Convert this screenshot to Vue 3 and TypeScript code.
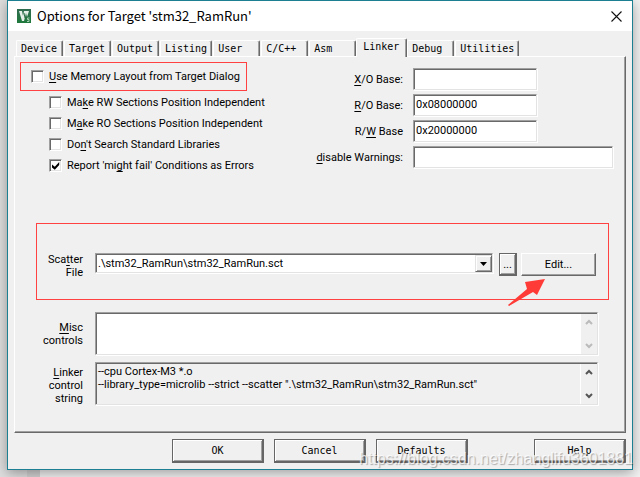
<script setup lang="ts">
import { ref } from 'vue'

interface Tab { name: string }
interface Option { id: string; pre: string; key: string; post: string; on: boolean }
interface Field { id: string; pre: string; key: string; post: string; value: string; wide?: boolean }

const tabs: Tab[] = ['Device', 'Target', 'Output', 'Listing', 'User', 'C/C++', 'Asm', 'Linker', 'Debug', 'Utilities'].map(name => ({ name }))
const active = ref('Linker')
const useLayout = ref(false)

const options = ref<Option[]>([
  { id: 'rw', pre: 'Ma', key: 'k', post: 'e RW Sections Position Independent', on: false },
  { id: 'ro', pre: 'M', key: 'a', post: 'ke RO Sections Position Independent', on: false },
  { id: 'lib', pre: 'Do', key: 'n', post: "'t Search Standard Libraries", on: false },
  { id: 'err', pre: "Report 'mi", key: 'g', post: "ht fail' Conditions as Errors", on: true },
])

const fields = ref<Field[]>([
  { id: 'xo', pre: '', key: 'X', post: '/O Base:', value: '' },
  { id: 'robase', pre: '', key: 'R', post: '/O Base:', value: '0x08000000' },
  { id: 'rwbase', pre: 'R/', key: 'W', post: ' Base', value: '0x20000000' },
  { id: 'warn', pre: '', key: 'd', post: 'isable Warnings:', value: '', wide: true },
])

const scatter = ref('.\\stm32_RamRun\\stm32_RamRun.sct')
const misc = ref('')
const control = '--cpu Cortex-M3 *.o\n--library_type=microlib --strict --scatter ".\\stm32_RamRun\\stm32_RamRun.sct"'
</script>

<template>
  <div class="desktop">
    <main class="dialog">
      <header class="titlebar">
        <svg class="logo" viewBox="0 0 14 14" aria-hidden="true">
          <defs>
            <linearGradient id="green" x1="0" y1="0" x2="0" y2="1">
              <stop offset="0" stop-color="#2f6b50" />
              <stop offset="1" stop-color="#1f7a3c" />
            </linearGradient>
          </defs>
          <rect width="14" height="14" fill="url(#green)" />
          <path d="M2 2h3l1 5 1-5h5l-2 6-1-4-2 8H5z" fill="#e4efe7" />
          <path d="M7 4l1 5" stroke="#2b7048" stroke-width="1" />
          <path d="M12.500 9h-2v1.500h1.500v2h-2" fill="none" stroke="#a8d0b4" stroke-width="1" />
        </svg>
        <h1>Options for Target 'stm32_RamRun'</h1>
        <button class="close" aria-label="Close">
          <svg viewBox="0 0 11 11"><path d="M.5.5l10 10M10.500.5l-10 10" stroke="#111" stroke-width="1.100" /></svg>
        </button>
      </header>

      <nav class="tabs" role="tablist">
        <button v-for="t in tabs" :key="t.name" role="tab" class="tab" :class="{ active: t.name === active }"
          :aria-selected="t.name === active" @click="active = t.name">{{ t.name }}</button>
      </nav>

      <section class="panel">
        <div class="upper">
          <div class="checks">
            <label class="check marked"><input v-model="useLayout" type="checkbox"><span><u>U</u>se Memory Layout from Target Dialog</span></label>
            <div class="sublist">
              <label v-for="o in options" :key="o.id" class="check">
                <input v-model="o.on" type="checkbox"><span>{{ o.pre }}<u>{{ o.key }}</u>{{ o.post }}</span>
              </label>
            </div>
          </div>
          <div class="fields">
            <template v-for="f in fields" :key="f.id">
              <label :for="f.id">{{ f.pre }}<u>{{ f.key }}</u>{{ f.post }}</label>
              <input :id="f.id" v-model="f.value" type="text" class="sunken" :class="{ wide: f.wide }">
            </template>
          </div>
        </div>

        <div class="scatter">
          <label for="scatter">Sca<u>t</u>ter<br>File</label>
          <div class="combo sunken">
            <select id="scatter" v-model="scatter"><option>{{ scatter }}</option></select>
            <span class="drop"><svg viewBox="0 0 7 4"><path d="M0 0h7L3.500 4z" /></svg></span>
          </div>
          <button class="push framed browse">...</button>
          <button class="push edit">Edit...</button>
          <svg class="arrow" viewBox="0 0 38 28" aria-hidden="true">
            <path d="M0 26L19 10 17 3 37 0 29 16 25 13 1 27z" fill="#ff3b38" />
          </svg>
        </div>

        <div class="memo">
          <label for="misc"><u>M</u>isc<br>controls</label>
          <div class="area sunken">
            <textarea id="misc" v-model="misc"></textarea>
            <div class="scroll off">
              <svg viewBox="0 0 8 6"><path d="M1 5l3-3 3 3" /></svg>
              <svg viewBox="0 0 8 6"><path d="M1 1l3 3 3-3" /></svg>
            </div>
          </div>
        </div>
        <div class="memo">
          <label for="control"><u>L</u>inker<br>control<br>string</label>
          <div class="area sunken gray">
            <textarea id="control" readonly :value="control"></textarea>
            <div class="scroll">
              <svg viewBox="0 0 8 6"><path d="M1 5l3-3 3 3" /></svg>
              <svg viewBox="0 0 8 6"><path d="M1 1l3 3 3-3" /></svg>
            </div>
          </div>
        </div>
      </section>

      <footer class="actions">
        <button class="push framed">OK</button>
        <button class="push framed">Cancel</button>
        <button class="push framed">Defaults</button>
        <button class="push framed help">Help</button>
      </footer>
    </main>
    <div class="watermark">https://blog.csdn.net/zhanglifu3601881</div>
  </div>
</template>

<style>
body { background: #ececec; }
</style>

<style scoped>
* { box-sizing: border-box; }
.desktop {
  position: relative;
  min-height: 100vh;
  padding: 0 7px;
  overflow: hidden;
  font: 11px/13px Roboto, "Liberation Sans", sans-serif;
  color: #000;
  background: linear-gradient(90deg, #dedede 27px, #d2d2d2 27px, #d2d2d2 40px, #f2f2f2 40px);
}
.dialog {
  display: flow-root;
  background: #f0f0f0;
  border: 1px solid #1d7f92;
  box-shadow: 0 3px 12px rgba(0, 0, 0, .35);
}
button, input, textarea, select { font: inherit; color: inherit; margin: 0; }
u { text-decoration: underline; text-underline-offset: 2px; text-decoration-thickness: 1px; }
.titlebar {
  display: flex;
  align-items: center;
  gap: 6px;
  height: 30px;
  padding: 0 10px 0 9px;
  background: #fff;
}
.logo { width: 14px; height: 14px; }
h1 { flex: 1; margin: 0; font: 400 13px/20px "Noto Sans CJK SC", "Noto Sans", sans-serif; }
.close { width: 11px; height: 11px; padding: 0; border: 0; background: none; }
.close svg { display: block; }

.tabs {
  display: flex;
  align-items: flex-end;
  gap: 1px;
  height: 25px;
  padding: 0 8px;
}
.tab {
  min-width: 47px;
  height: 16px;
  padding: 0 4px;
  text-align: left;
  font: 10px/14px "DejaVu Sans Mono", monospace;
  background: #f0f0f0;
  border: 1px solid #fff;
  border-right-color: #696969;
  border-bottom: 0;
  border-radius: 2px 2px 0 0;
  box-shadow: inset -1px 0 #a0a0a0;
}
.tab.active {
  position: relative;
  height: 19px;
  min-width: 51px;
  margin: 0 -1px -1px;
  padding: 0 6px 3px;
}

.panel {
  margin: 0 6px;
  padding: 5px 12px 27px 5px;
  border: 1px solid #fff;
  border-right-color: #696969;
  border-bottom-color: #696969;
  box-shadow: inset -1px -1px #a0a0a0;
}
.upper { display: flex; justify-content: space-between; align-items: flex-start; }
.check { display: flex; align-items: center; gap: 5px; height: 21px; white-space: nowrap; }
.check input {
  appearance: none;
  width: 13px;
  height: 13px;
  background: #fff;
  border: 1px solid #a0a0a0;
  border-right-color: #fff;
  border-bottom-color: #fff;
  box-shadow: inset 1px 1px #696969, inset -1px -1px #e3e3e3;
}
.check input:checked::after {
  content: "";
  display: block;
  width: 8px;
  height: 8px;
  margin: 2px;
  background: #000;
  clip-path: polygon(0 30%, 35% 58%, 90% 0, 90% 38%, 35% 98%, 0 68%);
}
.marked { height: 29px; width: 227px; padding-left: 10px; border: 1px solid #ff4141; }
.sublist { padding: 1px 0 0 29px; }
.sunken {
  background: #fff;
  border: 1px solid #a0a0a0;
  border-right-color: #e3e3e3;
  border-bottom-color: #e3e3e3;
  box-shadow: 1px 1px #fff, inset 1px 1px #696969;
  border-radius: 0;
  outline: 0;
}
.fields {
  display: grid;
  grid-template-columns: auto 200px;
  gap: 4px 10px;
  align-items: center;
  padding-top: 6px;
  text-align: right;
}
.fields input { width: 124px; height: 22px; padding: 0 0 2px 2px; }
.fields .wide { width: 200px; }

.scatter {
  position: relative;
  display: flex;
  align-items: flex-start;
  height: 77px;
  margin: 47px 4px 0 16px;
  padding: 29px 12px 0 0;
  border: 1px solid #ff4141;
}
.scatter label, .memo label { width: 46px; margin-right: 12px; text-align: right; }
.combo { flex: 1; display: grid; grid-template-columns: 1fr 17px; height: 20px; padding: 1px 0 0 1px; }
.combo select {
  grid-area: 1 / 1 / 2 / 3;
  appearance: none;
  min-width: 0;
  padding: 0 18px 0 1px;
  border: 0;
  outline: 0;
  background: none;
}
.drop {
  grid-area: 1 / 2;
  display: grid;
  place-items: center;
  pointer-events: none;
  background: #f0f0f0;
  border: 1px solid #e3e3e3;
  border-right-color: #696969;
  border-bottom-color: #696969;
  box-shadow: inset 1px 1px #fff, inset -1px -1px #a0a0a0;
}
.drop svg { width: 7px; height: 4px; }
.push {
  height: 23px;
  padding: 0;
  background: #f0f0f0;
  border: 1px solid #fff;
  border-right-color: #696969;
  border-bottom-color: #696969;
  box-shadow: inset -1px -1px #a0a0a0;
}
.push.framed { border: 1px solid #666; border-right-width: 2px; border-bottom-width: 2px; box-shadow: inset 1px 1px #fff, inset -1px -1px #a0a0a0; }
.browse { width: 18px; margin-left: 6px; }
.edit { width: 75px; margin-left: 4px; }
.arrow { position: absolute; right: 62px; bottom: -8px; width: 38px; height: 28px; }

.memo { display: flex; margin: 7px 15px 0 17px; }
.scatter + .memo { margin-top: 12px; }
.memo label { padding-top: 4px; height: 43px; }
.scatter + .memo label { padding-top: 9px; }
.area { flex: 1; display: flex; height: 43px; padding: 1px 0 0 1px; }
.area.gray { background: #f0f0f0; }
textarea { flex: 1; min-width: 0; padding: 1px; border: 0; outline: 0; resize: none; overflow: hidden; background: none; }
.scroll {
  display: flex;
  flex-direction: column;
  justify-content: space-between;
  align-items: center;
  width: 17px;
  padding: 5px 0;
  background: #f0f0f0;
  border-left: 1px solid #fff;
}
.scroll svg { width: 8px; height: 6px; fill: none; stroke: #555; stroke-width: 2px; }
.scroll.off svg { stroke: #bbb; }

.actions { display: flex; gap: 10px; padding: 6px 6px 6px 164px; }
.actions .push { width: 92px; height: 24px; font: 10px/14px "DejaVu Sans Mono", monospace; }
.actions .help { margin-left: auto; }
.watermark {
  position: absolute;
  right: 7px;
  bottom: 9px;
  font: 16px/18px "Liberation Sans", Arial, sans-serif;
  color: rgba(255, 255, 255, .75);
  text-shadow: 1px 1px 1px rgba(0, 0, 0, .3);
  pointer-events: none;
}
</style>
